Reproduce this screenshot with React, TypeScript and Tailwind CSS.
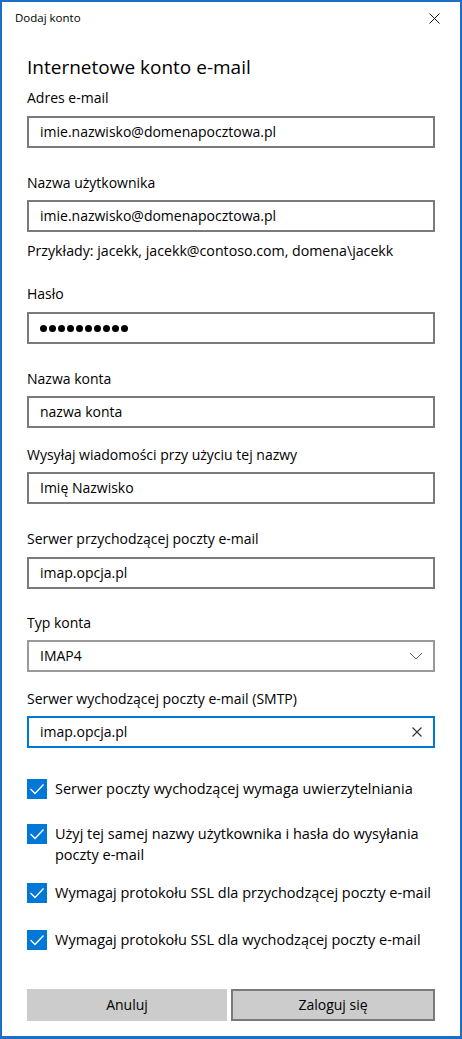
import React from "react";

const fieldText = "text-[14px] leading-[20px] text-black";

const TextBox = ({ value, focused, clear, mt }: { value: string; focused?: boolean; clear?: boolean; mt: string }) => (
  <div
    className={`${mt} flex h-[32px] items-center border-2 bg-white pl-[11px] pr-[9px] ${
      focused ? "border-[#0078d7]" : "border-[#7a7a7a]"
    }`}
  >
    <span className={`${fieldText} flex-1`}>{value}</span>
    {clear && (
      <svg width="12" height="12" viewBox="0 0 12 12" className="mr-[1px]">
        <path d="M1.5 1.5 L10.5 10.5 M10.5 1.5 L1.5 10.5" stroke="#333" strokeWidth="1.1" />
      </svg>
    )}
  </div>
);

const CheckRow = ({ label, mt }: { label: React.ReactNode; mt: string }) => (
  <div className={`${mt} flex items-start`}>
    <div className="mt-[1px] flex h-[20px] w-[20px] shrink-0 items-center justify-center bg-[#0078d7]">
      <svg width="20" height="20" viewBox="0 0 20 20">
        <polyline points="3.5,10 8,14.5 16.5,5.5" fill="none" stroke="#fff" strokeWidth="1.4" />
      </svg>
    </div>
    <span className="ml-[8px] text-[14.5px] leading-[21px] text-black">{label}</span>
  </div>
);

export default function App() {
  return (
    <div
      className="flex h-[1039px] w-[462px] flex-col border-2 border-b-[3px] border-[#1e6ec4] bg-white"
      style={{ fontFamily: '"Segoe UI", "Open Sans", sans-serif' }}
    >
      {/* title bar */}
      <div className="flex h-[32px] items-center justify-between pl-[13px] pr-[20px]">
        <span className="text-[11.5px] leading-[16px] text-black">Dodaj konto</span>
        <svg width="11" height="11" viewBox="0 0 11 11">
          <path d="M0.5 0.5 L10.5 10.5 M10.5 0.5 L0.5 10.5" stroke="#111" strokeWidth="1" />
        </svg>
      </div>

      <div className="flex flex-col px-[25px]">
        <h1 className="mt-[19px] text-[19px] leading-[28px] font-normal text-black">Internetowe konto e-mail</h1>

        <label className={`mt-[7px] ${fieldText}`}>Adres e-mail</label>
        <TextBox mt="mt-[8px]" value="imie.nazwisko@domenapocztowa.pl" />

        <label className={`mt-[25px] ${fieldText}`}>Nazwa użytkownika</label>
        <TextBox mt="mt-[7px]" value="imie.nazwisko@domenapocztowa.pl" />
        <p className="mt-[9px] text-[14.2px] leading-[20px] text-black">Przykłady: jacekk, jacekk@contoso.com, domena\jacekk</p>

        <label className={`mt-[23px] ${fieldText}`}>Hasło</label>
        <div className="mt-[8px] flex h-[32px] items-center gap-[2px] border-2 border-[#7a7a7a] pl-[11px]">
          {Array.from({ length: 10 }).map((_, i) => (
            <span key={i} className="h-[7px] w-[7px] rounded-full bg-black" />
          ))}
        </div>

        <label className={`mt-[25px] ${fieldText}`}>Nazwa konta</label>
        <TextBox mt="mt-[7px]" value="nazwa konta" />

        <label className={`mt-[17px] ${fieldText}`}>Wysyłaj wiadomości przy użyciu tej nazwy</label>
        <TextBox mt="mt-[7px]" value="Imię Nazwisko" />

        <label className={`mt-[25px] ${fieldText}`}>Serwer przychodzącej poczty e-mail</label>
        <TextBox mt="mt-[8px]" value="imap.opcja.pl" />

        <label className={`mt-[24px] ${fieldText}`}>Typ konta</label>
        <div className="mt-[7px] flex h-[32px] items-center justify-between border-2 border-[#999999] pl-[11px] pr-[10px]">
          <span className={fieldText}>IMAP4</span>
          <svg width="14" height="8" viewBox="0 0 14 8">
            <polyline points="1,1 7,7 13,1" fill="none" stroke="#666" strokeWidth="1" />
          </svg>
        </div>

        <label className={`mt-[17px] ${fieldText}`}>Serwer wychodzącej poczty e-mail (SMTP)</label>
        <TextBox mt="mt-[7px]" value="imap.opcja.pl" focused clear />

        <CheckRow mt="mt-[30px]" label="Serwer poczty wychodzącej wymaga uwierzytelniania" />
        <CheckRow
          mt="mt-[24px]"
          label={
            <>
              Użyj tej samej nazwy użytkownika i hasła do wysyłania
              <br />
              poczty e-mail
            </>
          }
        />
        <CheckRow mt="mt-[17px]" label="Wymagaj protokołu SSL dla przychodzącej poczty e-mail" />
        <CheckRow mt="mt-[26px]" label="Wymagaj protokołu SSL dla wychodzącej poczty e-mail" />

        <div className="mt-[39px] flex gap-[4px]">
          <button className={`h-[32px] flex-1 bg-[#cccccc] ${fieldText}`}>Anuluj</button>
          <button className={`h-[32px] flex-1 border-2 border-[#7a7a7a] bg-[#cccccc] ${fieldText}`}>Zaloguj się</button>
        </div>
      </div>
    </div>
  );
}
